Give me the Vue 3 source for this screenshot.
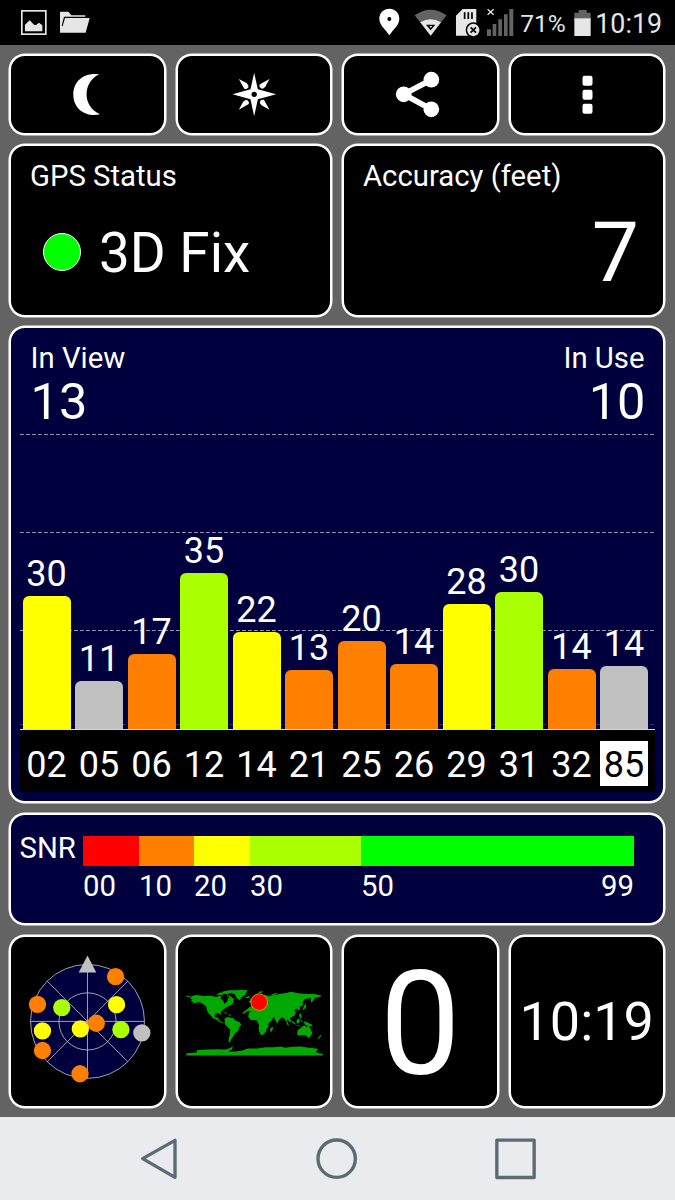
<template>
  <div class="screen">
    <header class="status-bar">
      <svg class="status-left" viewBox="0 0 300 135">
        <rect x="65.500" y="32.500" width="72" height="70" fill="none" stroke="#e6e6e6" stroke-width="5" />
        <path d="M75 94V74l14-13 13 13 6 1 9-7 10 8v18z" fill="#e6e6e6" />
        <path d="M180 98V37l3-2h22l9 11h42v4h-64l-7 27 3 2 7-25h74l-12 44z" fill="#e6e6e6" />
      </svg>
      <svg class="status-right" viewBox="90 0 436 135">
        <path d="M148 26c-17 0-30 13-30 30 0 20 18 31 30 50 12-19 30-30 30-50 0-17-13-30-30-30z" fill="#fff" />
        <circle cx="148" cy="57" r="6" fill="#000" />
        <path d="M224 46q48-34 96 0l-48 61z" fill="#636363" />
        <path d="M241 67q31-18 62 0l-31 40z" fill="#e6e6e6" />
        <path d="M258 74h28l-14 17z" fill="#000" />
        <path d="M268 78h9l-5 6z" fill="#e6e6e6" />
        <path d="M348 107V47l20-20h41v80z" fill="#e6e6e6" />
        <path d="M374 37v20M385 37v20M396 37v20" stroke="#000" stroke-width="5" />
        <circle cx="400" cy="90" r="23" fill="#000" />
        <circle cx="400" cy="90" r="18.500" fill="#e6e6e6" />
        <path d="M392 82l16 16M408 82l-16 16" stroke="#000" stroke-width="5" />
        <path d="M443 28l18 16M461 28l-18 16" stroke="#e6e6e6" stroke-width="4" />
        <path d="M441 88h12v20h-12zM458 72h11v36h-11zM475 58h11v50h-11zM492 43h11v65h-11zM508 27h12v81h-12z" fill="#636363" />
      </svg>
      <span class="percent">71%</span>
      <svg class="battery" viewBox="0 0 51 135">
        <path d="M1 60V38h13v-8h24v8h12v22z" fill="#636363" />
        <path d="M1 55h49v53H1z" fill="#e6e6e6" />
      </svg>
      <span class="clock">10:19</span>
    </header>

    <main class="panels">
      <button class="card">
        <svg viewBox="33 168 457.5 229.5">
          <path d="M297 223c-45-6-77 20-77 61 0 42 36 68 80 59-54-24-52-96-3-120z" fill="#fff" />
        </svg>
      </button>
      <button class="card">
        <svg viewBox="532.5 168 457.5 229.5">
          <path d="M761 218l11 50 55 15-55 15-11 51-11-51-54-15 54-15z" fill="#fff" />
          <path
            v-for="angle in [0, 90, 180, 270]"
            :key="angle"
            d="M715 237l24 13 5 7-1 6-5 4h-6l-4-7z"
            :transform="`rotate(${angle} 761 283)`"
            fill="#fff"
          />
          <circle cx="761" cy="283" r="8" fill="#000" />
        </svg>
      </button>
      <button class="card">
        <svg viewBox="12 168 457.5 229.5">
          <path d="M274 239l-83 44 83 45" fill="none" stroke="#fff" stroke-width="17" />
          <circle cx="274" cy="239" r="23.500" fill="#fff" />
          <circle cx="191" cy="283" r="23.500" fill="#fff" />
          <circle cx="274" cy="328" r="23.500" fill="#fff" />
        </svg>
      </button>
      <button class="card">
        <svg viewBox="511.5 168 457.5 229.5">
          <rect v-for="y in [227, 269, 311]" :key="y" x="726" :y="y" width="30" height="30" rx="6" fill="#fff" />
        </svg>
      </button>

      <section class="card half">
        <h2>GPS Status</h2>
        <div class="fix">
          <span class="dot"></span>
          <span>3D Fix</span>
        </div>
      </section>
      <section class="card half">
        <h2>Accuracy (feet)</h2>
        <div class="accuracy">7</div>
      </section>

      <section class="card chart">
        <div class="chart-head">
          <div>
            <h2>In View</h2>
            <div class="count">13</div>
          </div>
          <div class="in-use">
            <h2>In Use</h2>
            <div class="count">10</div>
          </div>
        </div>
        <div class="plot">
          <svg class="grid-lines" viewBox="0 0 636 297">
            <path d="M0 1.500H635M0 99.500H635M0 197.500H635" />
            <path class="dim" d="M0 291.500H635" />
          </svg>
          <div v-for="sat in satellites" :key="sat.prn" class="bar-col">
            <span class="snr">{{ sat.snr }}</span>
            <div class="bar" :class="sat.color" :style="{ height: sat.height + 'px' }"></div>
          </div>
        </div>
        <div class="prn-row">
          <span v-for="sat in satellites" :key="sat.prn" :class="{ sbas: sat.prn === '85' }">{{ sat.prn }}</span>
        </div>
      </section>

      <section class="card legend">
        <span class="legend-title">SNR</span>
        <div class="scale">
          <div class="step"><i class="red"></i><span>00</span></div>
          <div class="step"><i class="orange"></i><span>10</span></div>
          <div class="step"><i class="yellow"></i><span>20</span></div>
          <div class="step"><i class="lime"></i><span>30</span></div>
          <div class="step last"><i class="green"></i><span>50</span><span>99</span></div>
        </div>
      </section>

      <section class="card">
        <svg viewBox="33 19.5 457.5 508.5">
          <g stroke="#bfbfcb" stroke-width="2.500">
            <circle cx="262.500" cy="273.500" r="171.500" fill="#00003f" />
            <circle cx="262.500" cy="273.500" r="86" fill="none" />
            <path d="M91 273.500h343M262.500 102v343M141 152l243 243M384 152l-243 243" />
          </g>
          <path d="M262.500 75l26.500 51h-53z" fill="#c0c0c0" />
          <circle v-for="(s, i) in sky" :key="i" :cx="s[0]" :cy="s[1]" r="26" :fill="s[2]" />
        </svg>
      </section>
      <section class="card">
        <svg viewBox="7.5 -115.5 457.5 508.5">
          <g fill="#00a800">
            <!-- Americas -->
            <path d="M49 62l14-3 22 3 24 0 14 3 8-4 8 3-5 5 9 7 4 10 8-8 4-12 11 5 5 10-6 6-10 6-10 5-9 8-5 5 2 8-4-1-3-5-10 1-4 8 5 6 8-3-1 7 8 8 8 2-3 2-10-4-9-7-10-4-7-9-5-4-6-10-2-12-9-8-12-6-15 3-8 3 5-5-8-5 6-3-8-4z" />
            <path d="M30 60l8 2 8-1-3 4-10-1zM121 58l14-7 14 2-8 6zM139 49l20-4 16 0-10 7-8 5-9-1zM151 58l12 3 10 8 3 7-8-4-8-8z" />
            <path d="M157 50l18-5 20-1 21 1-4 8-4 7-9 5-8 10-8-8-5-10-10-4z" />
            <path d="M139 108l11 3 8 5-8-2zM159 118h8v3h-8z" />
            <path d="M146 131l9-6 17 3 7 7 14 7 4 6-6 8-3 11-9 6-5 9-5 7-4 8-2 6-4-3 1-11 3-11 1-15-8-8-9-9 1-9z" />
            <!-- Europe and Asia -->
            <path d="M226 93l8-2 2-7 8-5 4-8-6-1 9-9 17-3 13 5 14-4 22-4 15-2 16-4 16 4 24 3 28 0 25 5-10 4-12 3-6 8-5 6-2-8 2-6-20 3-6 9 1 9-10 6 1 7-5 3-4-5-8 4 4 8-5 10-10 5-3 2 5 8-4 5-7-9-3 2 6 14 2 5-7-6-4-13-8-8-8 2-8 11-1 7-7-15-4-6-12-1-4-6 0 8 7 3-2 6-14 7-9-16-2-10-17-1-2-7-8 0 6 7-5-1-8-8-12 2-6 6-8-1z" />
            <path d="M219 78l5-2 1-7 5 7 2 6-8 2zM210 65l10-2 4 3-6 3-7-1zM248 49l15-1-3 4-10 1zM285 59l15-6 8-1-14 8zM392 96l-5 6-9 4 6-7 2-8 6-7zM340 53l12-3-3 4z" />
            <!-- Africa -->
            <path d="M231 102l17-1 7 6 18 0 6 9 6 10 9-1-3 8-12 12 0 10-6 6-1 8-7 8-8 3-5-10-3-12 2-9-6-10-3-5-16 0-8-9 2-11z" />
            <path d="M290 154l3 5-4 10-4 1-1-8z" />
            <!-- Oceania -->
            <path d="M348 136l6 3 8 8-4 1-9-8zM363 137l6-7 5 4-3 9-7 1zM364 149l16 3-5 1-12-2zM375 128l4 8 4 7-6-5zM384 138l8 2 8 3 9 5 3 6-12-2-11-4zM371 118l4-5 4 10-2 7-4-4z" />
            <path d="M367 164l10-6 5-6 7-1 5 5 5-7 8 15 4 10-6 10-6 3-9-7-9-1-11 3-5-4zM397 187h5l-2 4zM434 179l5 2-5 6-5 5-2-2 5-5z" />
            <!-- Antarctica -->
            <path d="M32 234l32-2-1-7 30-2 34-1 24 1 15-5 5-7-1 11-13 7 22 0 21-3 17-6 28 0 25-4 25 0 21-2 14 4 21-3 25-1 25 4 23 2 5 3-7 5 2 4 9 3h9v6H32z" />
          </g>
          <circle cx="251" cy="80.500" r="25" fill="red" stroke="#ff9a00" stroke-width="2.500" />
        </svg>
      </section>
      <section class="card speed">0</section>
      <section class="card time">10:19</section>
    </main>

    <nav class="nav-bar">
      <svg viewBox="-300 21 2025 249" fill="none" stroke="#5b6a73" stroke-width="10" stroke-linejoin="round">
        <path d="M128 146l97-55v111z" />
        <circle cx="710" cy="146" r="56" />
        <rect x="1190.500" y="90.500" width="112" height="112" />
      </svg>
    </nav>
  </div>
</template>

<script setup>
const satellites = [
  { prn: '02', snr: 30, height: 133, color: 'yellow' },
  { prn: '05', snr: 11, height: 48, color: 'gray' },
  { prn: '06', snr: 17, height: 75, color: 'orange' },
  { prn: '12', snr: 35, height: 156, color: 'lime' },
  { prn: '14', snr: 22, height: 97, color: 'yellow' },
  { prn: '21', snr: 13, height: 59, color: 'orange' },
  { prn: '25', snr: 20, height: 88, color: 'orange' },
  { prn: '26', snr: 14, height: 65, color: 'orange' },
  { prn: '29', snr: 28, height: 125, color: 'yellow' },
  { prn: '31', snr: 30, height: 137, color: 'lime' },
  { prn: '32', snr: 14, height: 60, color: 'orange' },
  { prn: '85', snr: 14, height: 63, color: 'gray' }
]

// x, y, colour of every satellite on the sky view
const sky = [
  [347, 139, '#ff8000'],
  [112, 222, '#ff8000'],
  [185, 232, '#aaff00'],
  [350, 223, '#ffff00'],
  [127, 302, '#ffff00'],
  [289, 279, '#ff8000'],
  [241, 296, '#ffff00'],
  [363, 298, '#aaff00'],
  [426, 308, '#c0c0c0'],
  [127, 361, '#ff8000'],
  [240, 431, '#ff8000']
]
</script>

<style>
body {
  margin: 0;
}
</style>

<style scoped>
.screen {
  width: 675px;
  height: 1200px;
  display: flex;
  flex-direction: column;
  overflow: hidden;
  background: #636363;
  color: #fff;
  font-family: Roboto, sans-serif;
}

svg {
  display: block;
}

/* status bar */
.status-bar {
  height: 45px;
  display: flex;
  background: #000;
  color: #e6e6e6;
  line-height: 48px;
}

.status-left {
  width: 100px;
  height: 45px;
}

.status-right {
  width: 145.3px;
  height: 45px;
  margin-left: auto;
}

.percent {
  width: 59px;
  padding-left: 5px;
  box-sizing: border-box;
  font-size: 24.5px;
}

.battery {
  width: 17px;
  height: 45px;
}

.clock {
  width: 83.7px;
  padding-left: 4px;
  box-sizing: border-box;
  font-size: 26.8px;
}

/* panels */
.panels {
  flex: none;
  height: 1072px;
  box-sizing: border-box;
  padding: 9px;
  display: grid;
  grid-template-columns: repeat(4, 156.5px);
  grid-template-rows: 80.5px 172.5px 477px 112.5px 173px;
  gap: 9.5px 10px;
}

.card {
  box-sizing: border-box;
  min-width: 0;
  padding: 0;
  border: 2px solid #fff;
  border-radius: 16px;
  box-shadow: 0 0 0 0.5px #fff;
  background: #000;
  overflow: hidden;
}

.card > svg {
  width: 100%;
  height: 100%;
}

h2 {
  margin: 0;
  font-size: 29.3px;
  font-weight: 400;
  line-height: 34px;
}

.half {
  grid-column: span 2;
  padding: 13px 24px 0 19px;
}

.fix {
  display: flex;
  align-items: center;
  gap: 18px;
  margin: 30px 0 0 13px;
  font-size: 54.8px;
  line-height: 60px;
}

.dot {
  width: 36px;
  height: 36px;
  margin-bottom: 3px;
  border: 1px solid #fff;
  border-radius: 50%;
  background: #0f0;
}

.accuracy {
  margin-top: 15px;
  font-size: 84px;
  line-height: 90px;
  text-align: right;
}

/* satellites chart */
.chart {
  grid-column: span 4;
  padding: 0 8.5px;
  background: #00003f;
}

.chart-head {
  height: 92px;
  display: flex;
  justify-content: space-between;
  padding: 13px 10px 0 11px;
}

.in-use {
  text-align: right;
}

.count {
  margin-top: 2px;
  font-size: 50.5px;
  line-height: 50px;
}

.in-use .count {
  margin-right: -1px;
}

.plot {
  position: relative;
  height: 296px;
  display: flex;
  gap: 4.5px;
  padding: 0 3px;
  border-bottom: 1px solid #d8d8d8;
}

.grid-lines {
  position: absolute;
  left: 0;
  top: 0;
  width: 636px;
  height: 297px;
  stroke: #9a9ab4;
  stroke-dasharray: 3.8 2.2;
}

.dim {
  stroke: #33335f;
}

.bar-col {
  position: relative;
  width: 48px;
  display: flex;
  flex-direction: column;
  justify-content: flex-end;
  align-items: center;
}

.snr {
  margin-bottom: 4px;
  font-size: 36px;
  line-height: 36px;
}

.bar {
  width: 48px;
  border-radius: 6px 6px 0 0;
}

.prn-row {
  height: 62px;
  display: flex;
  gap: 4.5px;
  padding: 0 3px;
  background: #000;
  font-size: 36px;
  line-height: 49px;
  text-align: center;
}

.prn-row span {
  width: 48px;
  height: 45px;
  margin-top: 11px;
}

.prn-row .sbas {
  background: #fff;
  color: #000;
}

/* SNR legend */
.legend {
  grid-column: span 4;
  display: flex;
  padding: 21px 29px 0 8.5px;
  background: #00003f;
  font-size: 29.3px;
}

.legend-title {
  width: 63.5px;
  line-height: 25px;
}

.scale {
  flex: 1;
  display: grid;
  grid-template-columns: 56px 55px 56px 111px 1fr;
  align-items: start;
}

.step {
  display: flex;
  flex-wrap: wrap;
  justify-content: space-between;
  line-height: 41px;
}

.step i {
  width: 100%;
  height: 30px;
}

.red {
  background: #f00;
}

.orange {
  background: #ff8000;
}

.yellow {
  background: #ff0;
}

.lime {
  background: #af0;
}

.green {
  background: #0f0;
}

.gray {
  background: #c0c0c0;
}

/* bottom tiles */
.speed,
.time {
  display: flex;
  align-items: center;
  justify-content: center;
  line-height: 1;
}

.speed {
  padding-top: 7px;
  font-size: 144px;
}

.time {
  padding-top: 2px;
  font-size: 54px;
}

/* navigation bar */
.nav-bar {
  height: 83px;
  background: #e9ebee;
}

.nav-bar svg {
  width: 675px;
  height: 83px;
}
</style>
